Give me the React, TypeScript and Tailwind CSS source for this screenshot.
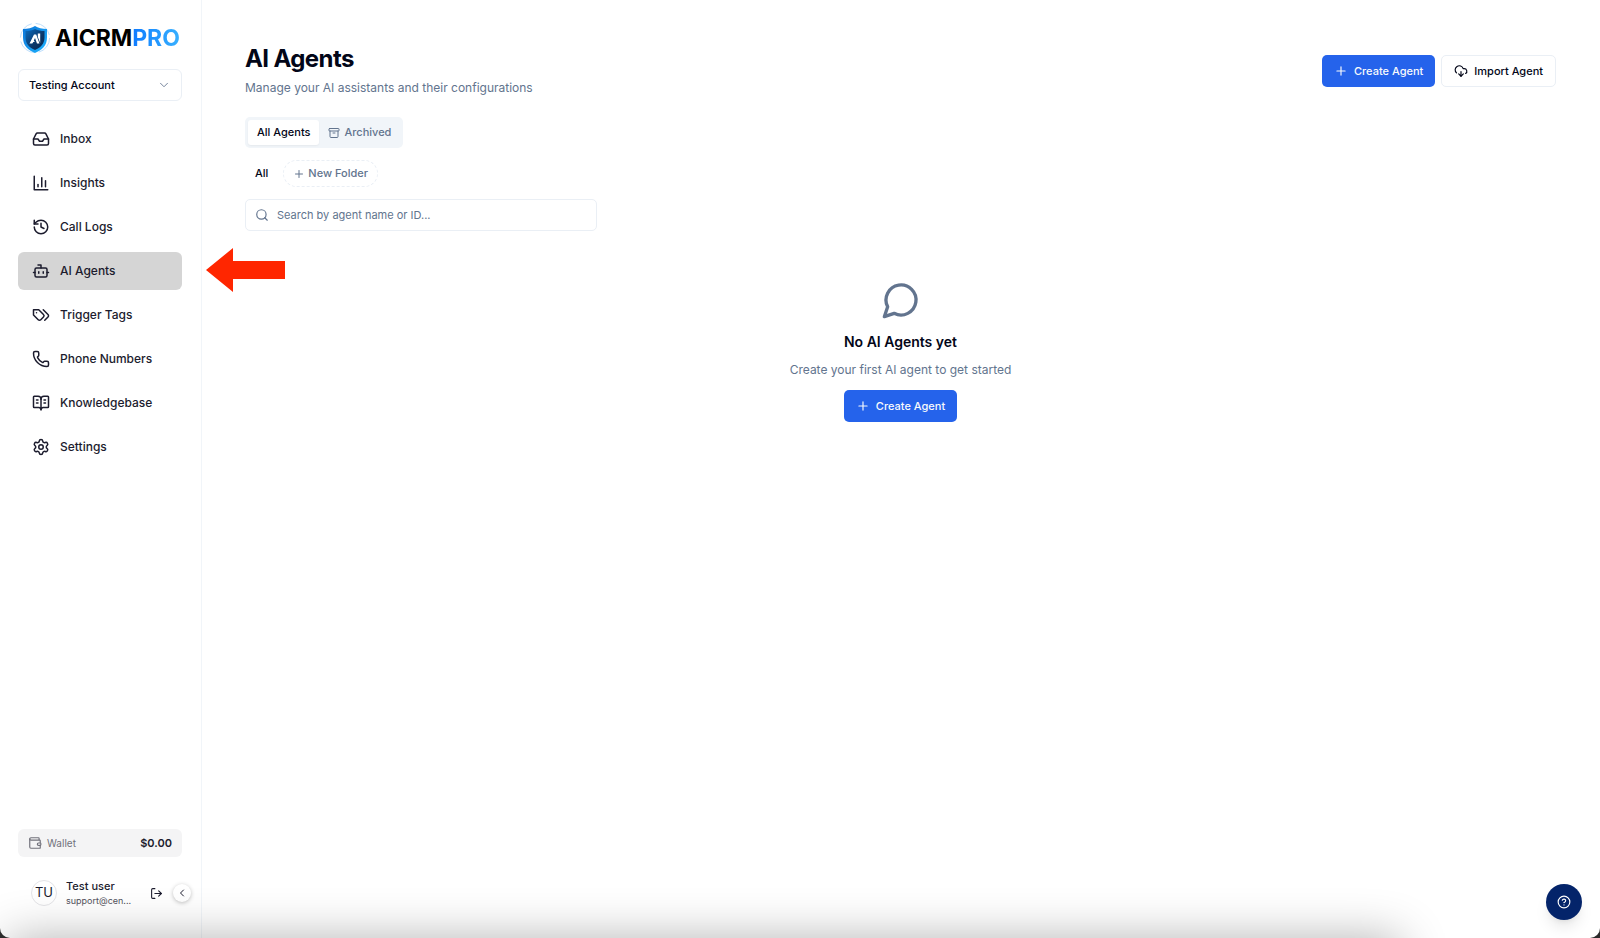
import type { ReactNode } from "react";
import {
  Archive,
  BookOpenText,
  Bot,
  ChevronDown,
  ChevronLeft,
  CircleHelp,
  CloudDownload,
  History,
  Inbox,
  LogOut,
  Phone,
  Plus,
  Search,
  Settings,
  Wallet,
} from "lucide-react";

function Icon({ paths, className }: { paths: string[]; className?: string }) {
  return (
    <svg
      viewBox="0 0 24 24"
      fill="none"
      stroke="currentColor"
      strokeWidth="2"
      strokeLinecap="round"
      strokeLinejoin="round"
      className={className}
      aria-hidden="true"
    >
      {paths.map((d) => (
        <path key={d} d={d} />
      ))}
    </svg>
  );
}

function InsightsIcon({ className }: { className?: string }) {
  return <Icon className={className} paths={["M3 3v18h18", "M18 17V9", "M13 17V5", "M8 17v-3"]} />;
}

function TagsIcon({ className }: { className?: string }) {
  return (
    <Icon
      className={className}
      paths={[
        "M9 5H2v7l6.290 6.290c.94.94 2.480.94 3.420 0l3.580-3.580c.94-.94.94-2.480 0-3.420L9 5Z",
        "M6 9.010V9",
        "m15 5 6.300 6.300a2.400 2.400 0 0 1 0 3.400L17 19",
      ]}
    />
  );
}

const navItems = [
  { label: "Inbox", icon: Inbox },
  { label: "Insights", icon: InsightsIcon },
  { label: "Call Logs", icon: History },
  { label: "AI Agents", icon: Bot, active: true },
  { label: "Trigger Tags", icon: TagsIcon },
  { label: "Phone Numbers", icon: Phone },
  { label: "Knowledgebase", icon: BookOpenText },
  { label: "Settings", icon: Settings },
];

function Logo() {
  return (
    <a href="#" className="flex items-center gap-1 pl-px">
      <svg viewBox="0 0 32 32" className="size-8 shrink-0" aria-hidden="true">
        <defs>
          <linearGradient id="shield-rim" x1="0" y1="0" x2="1" y2="1">
            <stop offset="0" stopColor="#0a74d8" />
            <stop offset="1" stopColor="#1fb4ff" />
          </linearGradient>
          <linearGradient id="shield-face" x1="0" y1="0" x2="1" y2="1">
            <stop offset="0" stopColor="#0a6cc0" />
            <stop offset="0.6" stopColor="#0a3566" />
            <stop offset="1" stopColor="#08284f" />
          </linearGradient>
        </defs>
        <circle cx="16" cy="16" r="14.600" fill="none" stroke="#b5dafa" strokeWidth="0.9" strokeDasharray="19 4" />
        <path d="M16 4c3 2 7 3 12 3v8.500c0 8-5 12.500-12 15.500C9 28 4 23.500 4 15.500V7c5 0 9-1 12-3z" fill="url(#shield-rim)" />
        <path d="M16 7c3 1.500 6 2 9.500 2v6.500c0 6.500-4 10-9.500 12.500-5.500-2.500-9.500-6-9.500-12.500V9C10 9 13 8.500 16 7z" fill="url(#shield-face)" />
        <path d="M10.500 21.500l4.500-9h2.200l3.300 9h-2.500l-2-5.500-1.200 2.500 1 1.500h-1.500l-1 1.500z" fill="#fff" />
        <path d="M18.800 11.500h2.400v9.500l-2.400-6z" fill="#fff" />
      </svg>
      <span className="text-[23px] leading-8 font-bold text-black">
        AICRM
        <span className="bg-linear-to-r from-[#0f7bff] to-[#38b0ff] bg-clip-text text-transparent">PRO</span>
      </span>
    </a>
  );
}

function PrimaryButton({ children }: { children: ReactNode }) {
  return (
    <button type="button" className="flex h-8 items-center gap-1.5 rounded-[5px] bg-[#2563eb] px-3 text-[11px] font-medium text-slate-50">
      <Plus className="size-3.5" />
      {children}
    </button>
  );
}

function Sidebar() {
  return (
    <aside className="flex w-[202px] shrink-0 flex-col border-r border-slate-100 pt-[22px] pr-[19px] pb-[29px] pl-[18px] text-[#1c1c2e]">
      <Logo />
      <button type="button" className="mt-[15px] flex h-8 items-center justify-between rounded-md border border-[#eaeff5] px-2.5 text-[11px] font-medium text-slate-950">
        Testing Account
        <ChevronDown className="size-3.5 text-slate-500" strokeWidth={1.5} />
      </button>

      <nav className="mt-[19px] flex flex-col gap-1.5">
        {navItems.map(({ label, icon: NavIcon, active }) => (
          <a
            key={label}
            href="#"
            aria-current={active ? "page" : undefined}
            className={`flex h-[38px] items-center gap-2.5 rounded-md px-3.5 text-xs font-medium ${active ? "bg-[#d5d5d5]" : ""}`}
          >
            <NavIcon className="size-[18px]" />
            {label}
          </a>
        ))}
      </nav>

      <div className="mt-auto flex h-7 items-center rounded-md bg-[#f4f4f5] px-2.5">
        <Wallet className="size-3.5 text-zinc-500" />
        <span className="ml-[5px] text-[10px] text-zinc-500">Wallet</span>
        <span className="ml-auto text-[11px] font-semibold">$0.00</span>
      </div>

      <div className="mt-5 -mr-[9px] flex h-8 items-center pl-[13px]">
        <span className="flex size-[26px] shrink-0 items-center justify-center rounded-full border border-zinc-200 text-[13px]">TU</span>
        <div className="ml-[9px]">
          <p className="text-[11px] leading-[15px] font-medium">Test user</p>
          <p className="text-[9px] leading-[13px] text-zinc-600">support@cen...</p>
        </div>
        <button type="button" aria-label="Log out" className="ml-auto">
          <LogOut className="size-[13px]" />
        </button>
        <button type="button" aria-label="Collapse sidebar" className="ml-2.5 flex size-[18px] items-center justify-center rounded-full bg-white shadow-[0_1px_4px_rgba(0,0,0,0.25)]">
          <ChevronLeft className="size-3" />
        </button>
      </div>
    </aside>
  );
}

function EmptyState() {
  return (
    <section className="mt-[49px] flex flex-col items-center">
      <Icon className="size-10 text-slate-500" paths={["M7.900 20A9 9 0 1 0 4 16.100L2 22Z"]} />
      <h2 className="mt-3 text-sm leading-5 font-semibold">No AI Agents yet</h2>
      <p className="mt-2 mb-2.5 text-xs leading-5 text-slate-500">Create your first AI agent to get started</p>
      <PrimaryButton>Create Agent</PrimaryButton>
    </section>
  );
}

export default function App() {
  return (
    <div className="bg-[#2b2b2b] font-['Inter',sans-serif]">
      <div className="relative flex min-h-screen overflow-hidden rounded-b-[10px] bg-white text-slate-950">
        <Sidebar />

        <main className="flex-1 pt-11 pr-11 pl-[43px]">
          <header className="flex items-start justify-between">
            <div>
              <h1 className="text-2xl leading-[30px] font-bold tracking-tight">AI Agents</h1>
              <p className="mt-1 text-xs leading-5 text-slate-500">Manage your AI assistants and their configurations</p>
            </div>
            <div className="mt-[11px] flex gap-1.5">
              <PrimaryButton>Create Agent</PrimaryButton>
              <button type="button" className="flex h-8 items-center gap-1.5 rounded-[5px] border border-[#eaeff5] px-3 text-[11px] font-medium">
                <CloudDownload className="size-3.5" />
                Import Agent
              </button>
            </div>
          </header>

          <div className="mt-[19px] flex w-fit items-center rounded-[5px] bg-slate-100 p-[3px] text-[11px] font-medium">
            <button type="button" className="h-[25px] rounded-[3px] bg-white px-[9px] shadow-xs">All Agents</button>
            <button type="button" className="flex h-[25px] items-center gap-1 px-[9px] text-slate-500">
              <Archive className="size-3" />
              Archived
            </button>
          </div>

          <div className="mt-3 flex h-[27px] items-center gap-[5px] text-[11px] font-medium">
            <button type="button" className="px-2.5">All</button>
            <button type="button" className="flex h-[27px] items-center gap-[3px] rounded-full border border-dashed border-[#eaeff5] px-[9px] text-slate-500">
              <Plus className="size-3" />
              New Folder
            </button>
          </div>

          <label className="mt-3 flex h-8 w-[352px] items-center gap-2 rounded-[5px] border border-[#eaeff5] px-[9px]">
            <Search className="size-3.5 text-slate-500" />
            <input
              type="text"
              aria-label="Search agents"
              placeholder="Search by agent name or ID..."
              className="flex-1 text-[11px] outline-none placeholder:text-slate-500"
            />
          </label>

          <EmptyState />
        </main>

        {/* soft shade rising from below the window, it stops short of the help button */}
        <div className="pointer-events-none absolute right-[200px] -bottom-20 left-2 h-20 shadow-[0_0_48px_rgba(0,0,0,0.3)]" />

        <button type="button" aria-label="Help" className="absolute right-[18px] bottom-[18px] flex size-9 items-center justify-center rounded-full bg-[#04246a] text-white shadow-lg">
          <CircleHelp className="size-3.5" />
        </button>

        <svg viewBox="0 0 79 44" className="absolute top-[248px] left-[206px] h-11 w-[79px]" aria-hidden="true">
          <path d="M0 22L27 0v13h52v18H27v13z" fill="#ff2600" />
        </svg>
      </div>
    </div>
  );
}
